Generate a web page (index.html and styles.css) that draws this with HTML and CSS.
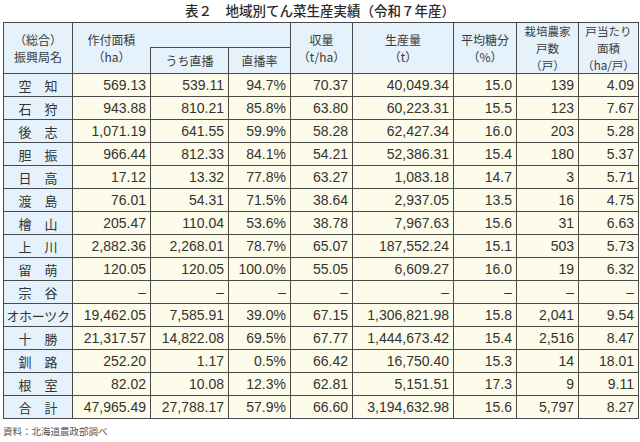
FILE: index.html
```html
<!DOCTYPE html>
<html lang="ja">
<head>
<meta charset="utf-8">
<title>表２ 地域別てん菜生産実績</title>
<link rel="stylesheet" href="styles.css">
</head>
<body>
<div class="page">
  <h1 class="title">表２　地域別てん菜生産実績（令和７年産）</h1>
  <table class="stats">
    <colgroup>
      <col class="c-name"><col class="c-area"><col class="c-direct"><col class="c-rate">
      <col class="c-yield"><col class="c-prod"><col class="c-sugar"><col class="c-farms"><col class="c-per">
    </colgroup>
    <thead>
      <tr class="h1">
        <th rowspan="2">（総合）<br>振興局名</th>
        <th rowspan="2">作付面積<br>（ha）</th>
        <th colspan="2" class="blank"></th>
        <th rowspan="2">収量<br>（t/ha）</th>
        <th rowspan="2">生産量<br>（t）</th>
        <th rowspan="2">平均糖分<br>（%）</th>
        <th rowspan="2" class="three">栽培農家<br>戸数<br>（戸）</th>
        <th rowspan="2" class="three">戸当たり<br>面積<br>（ha/戸）</th>
      </tr>
      <tr class="h2">
        <th>うち直播</th>
        <th>直播率</th>
      </tr>
    </thead>
    <tbody>
      <tr><th>空　知</th><td>569.13</td><td>539.11</td><td>94.7%</td><td>70.37</td><td>40,049.34</td><td>15.0</td><td>139</td><td>4.09</td></tr>
      <tr><th>石　狩</th><td>943.88</td><td>810.21</td><td>85.8%</td><td>63.80</td><td>60,223.31</td><td>15.5</td><td>123</td><td>7.67</td></tr>
      <tr><th>後　志</th><td>1,071.19</td><td>641.55</td><td>59.9%</td><td>58.28</td><td>62,427.34</td><td>16.0</td><td>203</td><td>5.28</td></tr>
      <tr><th>胆　振</th><td>966.44</td><td>812.33</td><td>84.1%</td><td>54.21</td><td>52,386.31</td><td>15.4</td><td>180</td><td>5.37</td></tr>
      <tr><th>日　高</th><td>17.12</td><td>13.32</td><td>77.8%</td><td>63.27</td><td>1,083.18</td><td>14.7</td><td>3</td><td>5.71</td></tr>
      <tr><th>渡　島</th><td>76.01</td><td>54.31</td><td>71.5%</td><td>38.64</td><td>2,937.05</td><td>13.5</td><td>16</td><td>4.75</td></tr>
      <tr><th>檜　山</th><td>205.47</td><td>110.04</td><td>53.6%</td><td>38.78</td><td>7,967.63</td><td>15.6</td><td>31</td><td>6.63</td></tr>
      <tr><th>上　川</th><td>2,882.36</td><td>2,268.01</td><td>78.7%</td><td>65.07</td><td>187,552.24</td><td>15.1</td><td>503</td><td>5.73</td></tr>
      <tr><th>留　萌</th><td>120.05</td><td>120.05</td><td>100.0%</td><td>55.05</td><td>6,609.27</td><td>16.0</td><td>19</td><td>6.32</td></tr>
      <tr><th>宗　谷</th><td>–</td><td>–</td><td>–</td><td>–</td><td>–</td><td>–</td><td>–</td><td>–</td></tr>
      <tr><th class="wide">オホーツク</th><td>19,462.05</td><td>7,585.91</td><td>39.0%</td><td>67.15</td><td>1,306,821.98</td><td>15.8</td><td>2,041</td><td>9.54</td></tr>
      <tr><th>十　勝</th><td>21,317.57</td><td>14,822.08</td><td>69.5%</td><td>67.77</td><td>1,444,673.42</td><td>15.4</td><td>2,516</td><td>8.47</td></tr>
      <tr><th>釧　路</th><td>252.20</td><td>1.17</td><td>0.5%</td><td>66.42</td><td>16,750.40</td><td>15.3</td><td>14</td><td>18.01</td></tr>
      <tr><th>根　室</th><td>82.02</td><td>10.08</td><td>12.3%</td><td>62.81</td><td>5,151.51</td><td>17.3</td><td>9</td><td>9.11</td></tr>
      <tr><th>合　計</th><td>47,965.49</td><td>27,788.17</td><td>57.9%</td><td>66.60</td><td>3,194,632.98</td><td>15.6</td><td>5,797</td><td>8.27</td></tr>
    </tbody>
  </table>
  <p class="source">資料：北海道農政部調べ</p>
</div>
</body>
</html>
```

FILE: styles.css
```css
html, body {
  margin: 0;
  padding: 0;
  background: #ffffff;
}

.page {
  width: 640px;
  height: 442px;
  font-family: "Noto Sans CJK JP", "Noto Sans", sans-serif;
  color: #333333;
}

.title {
  margin: 0;
  height: 22px;
  line-height: 20px;
  font-size: 13.5px;
  font-weight: 500;
  text-align: center;
  color: #2b2b2b;
}

.stats {
  margin-left: 3px;
  width: 635px;
  table-layout: fixed;
  border-collapse: collapse;
  border: 1px solid #4a4a4a;
}

.c-name { width: 69px; }
.c-area { width: 78px; }
.c-direct { width: 78px; }
.c-rate { width: 62px; }
.c-yield { width: 62px; }
.c-prod { width: 101px; }
.c-sugar { width: 63px; }
.c-farms { width: 62px; }
.c-per { width: 60px; }

.stats th,
.stats td {
  border: 1px solid #4a4a4a;
  padding: 0;
}

.stats thead th {
  background: #e5f2fb;
  font-weight: 400;
  font-size: 12px;
  line-height: 17.4px;
  color: #3a3a3a;
  text-align: center;
  vertical-align: middle;
}

.stats thead th.three {
  font-size: 11.6px;
  line-height: 16.8px;
}

.stats thead .h1 th { height: 23px; }
.stats thead .h2 th { height: 25px; }

.stats thead th.blank {
  border-left: hidden;
}

.stats tbody tr { height: 23px; }

.stats tbody th {
  background: #e5f2fb;
  font-weight: 400;
  font-size: 13px;
  line-height: 21px;
  text-align: center;
  color: #333333;
  white-space: nowrap;
}

.stats tbody th.wide {
  letter-spacing: -0.3px;
}

.stats tbody td {
  background: #fdfbe9;
  font-family: "Liberation Sans", "Noto Sans", sans-serif;
  font-size: 14px;
  line-height: 21px;
  text-align: right;
  padding-right: 4px;
  color: #333333;
  white-space: nowrap;
}

.source {
  margin: 6px 0 0 3px;
  font-size: 9.5px;
  line-height: 12px;
  color: #555555;
}
```
